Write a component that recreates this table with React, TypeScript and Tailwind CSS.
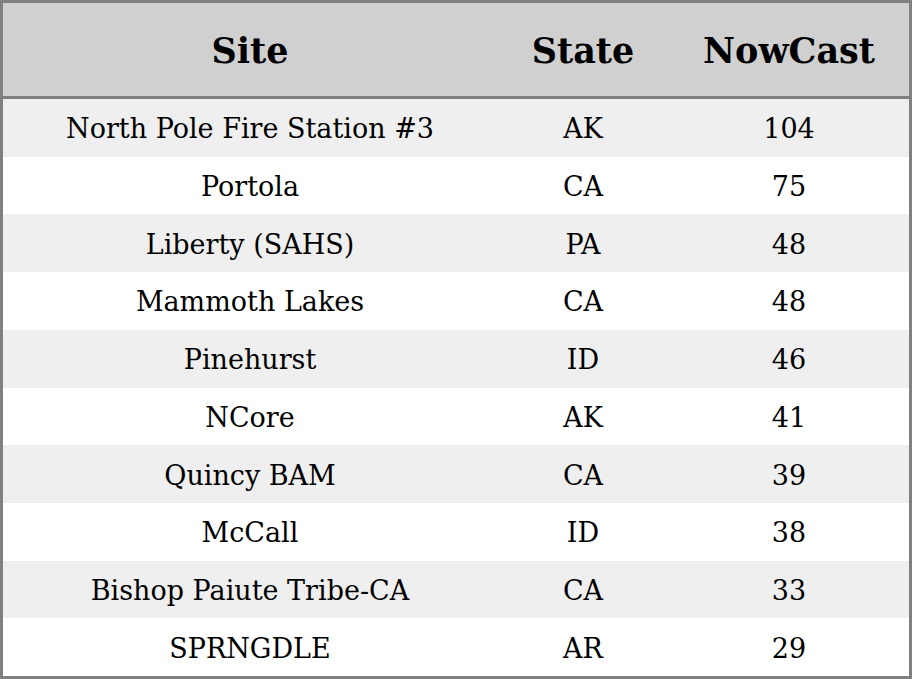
import React from "react";

const rows: [string, string, string][] = [
  ["North Pole Fire Station #3", "AK", "104"],
  ["Portola", "CA", "75"],
  ["Liberty (SAHS)", "PA", "48"],
  ["Mammoth Lakes", "CA", "48"],
  ["Pinehurst", "ID", "46"],
  ["NCore", "AK", "41"],
  ["Quincy BAM", "CA", "39"],
  ["McCall", "ID", "38"],
  ["Bishop Paiute Tribe-CA", "CA", "33"],
  ["SPRNGDLE", "AR", "29"],
];

export default function App() {
  return (
    <div
      className="w-[912px] h-[679px] border-[3px] border-[#808080] bg-white text-black flex flex-col"
      style={{ fontFamily: '"DejaVu Serif", serif' }}
    >
      <div className="h-[96px] shrink-0 bg-[#d0d0d0] border-b-[3px] border-[#808080] flex items-center text-[35px] font-bold pt-[3px]">
        <div className="w-[494px] text-center">Site</div>
        <div className="w-[172px] text-center">State</div>
        <div className="flex-1 text-center">NowCast</div>
      </div>
      <div className="flex-1 flex flex-col">
        {rows.map((r, i) => (
          <div
            key={i}
            className={`flex-1 flex items-center text-[27px] leading-none pt-[2px] ${i % 2 === 0 ? "bg-[#efefef]" : "bg-white"}`}
          >
            <div className="w-[494px] text-center">{r[0]}</div>
            <div className="w-[172px] text-center">{r[1]}</div>
            <div className="flex-1 text-center">{r[2]}</div>
          </div>
        ))}
      </div>
    </div>
  );
}
